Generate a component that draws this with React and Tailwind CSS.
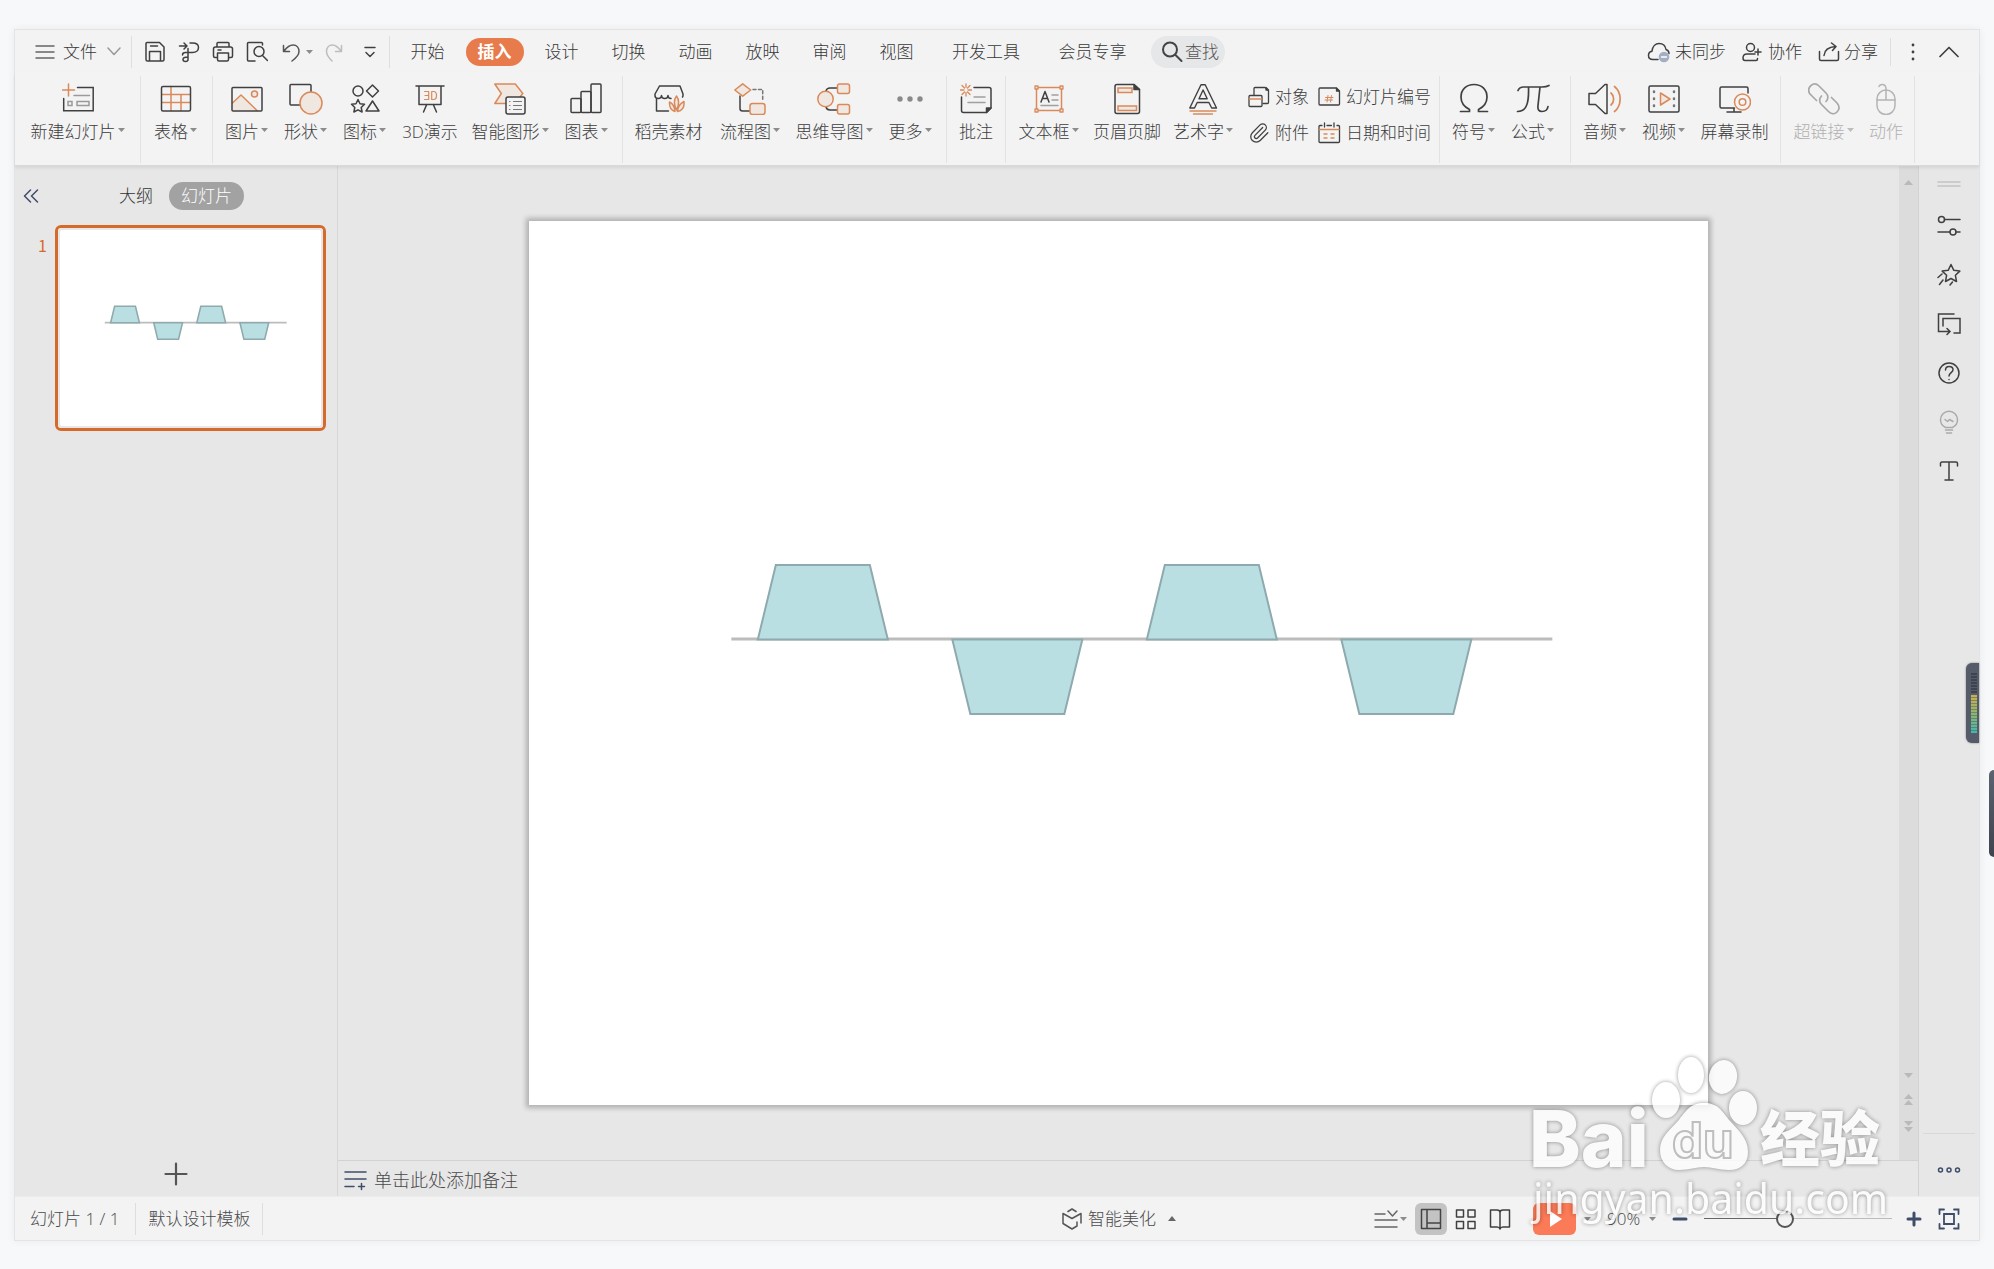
import { Paperclip } from 'lucide-react'

const INK = '#404040'
const ORANGE = '#d98a5b'
const TINT = '#f1e7e1'
const NAVY = '#3f4d68'

function Icon({ w = 32, h = 32, color = INK, stroke = 1.5, className = '', children }) {
  return (
    <svg
      width={w}
      height={h}
      viewBox={`0 0 ${w} ${h}`}
      fill="none"
      stroke={color}
      strokeWidth={stroke}
      strokeLinecap="round"
      strokeLinejoin="round"
      aria-hidden="true"
      className={`shrink-0 ${className}`}
    >
      {children}
    </svg>
  )
}

function Caret({ up = false, size = 7, className = 'text-[#8c8c8c]' }) {
  return (
    <svg
      width={size}
      height={size === 7 ? 4 : 5}
      viewBox="0 0 7 4"
      preserveAspectRatio="none"
      aria-hidden="true"
      className={`shrink-0 ${className}`}
    >
      <path d={up ? 'M0 4h7L3.500 0z' : 'M0 0h7L3.500 4z'} fill="currentColor" />
    </svg>
  )
}

/* ---------- ribbon icons ---------- */

const icons = {
  newSlide: (
    <Icon>
      <path d="M6.500 1v12M.5 7h12" stroke={ORANGE} />
      <path d="M15.500 4.500h15.700v23.300H1.700V15.500" strokeLinejoin="miter" />
      <path d="M12 12.500h15.500M6 18.500h4v4H6zM15 18.500h12v4H15z" stroke="#9a9a9a" strokeLinejoin="miter" />
    </Icon>
  ),
  table: (
    <Icon>
      <path d="M11 3.500v24M21 11.500v16M2 11.500h28M2 19.500h28" stroke={ORANGE} />
      <rect x="1.500" y="3.500" width="29" height="24.500" rx="1.500" />
    </Icon>
  ),
  picture: (
    <Icon>
      <path d="M1 20.500L10 12l15.500 16H1z" fill={TINT} stroke="none" />
      <path d="M1.500 20L10 12l16 15.500" stroke={ORANGE} />
      <circle cx="23.500" cy="11" r="3" fill={TINT} stroke={ORANGE} />
      <rect x="1" y="4.500" width="30" height="23.500" rx="1" />
    </Icon>
  ),
  shapes: (
    <Icon w={34}>
      <rect x="1" y="1.500" width="21" height="20.500" rx="1" />
      <circle cx="22" cy="20" r="11" fill={TINT} stroke={ORANGE} />
    </Icon>
  ),
  iconSet: (
    <Icon>
      <circle cx="9" cy="8" r="5" />
      <path d="M23.500 2l6 6-6 6-6-6z" />
      <path d="M9 16.500l2 4.300 4.500.5-3.300 3.200.9 4.500L9 26.800 4.900 29l.9-4.500-3.300-3.200 4.500-.5z" />
      <path d="M23.500 18l6.500 10H17z" />
    </Icon>
  ),
  threeD: (
    <Icon>
      <path d="M2 3h28M5 3v18.500h22V3M12.500 22l-3 7M19.500 22l3 7" />
      <path
        d="M10.500 8.500h4.200v8h-4.200M11 12.500h3.700M17.700 8.500h1.800c2 0 3 1.500 3 4s-1 4-3 4h-1.800z"
        stroke={ORANGE}
        strokeWidth="1.200"
      />
    </Icon>
  ),
  smartArt: (
    <Icon>
      <path d="M.8 1h20.500l7.500 9.500-8 10H.8l6.500-10z" fill={TINT} stroke={ORANGE} />
      <rect x="12" y="14" width="19" height="17" rx="2" fill="#f3f3f3" />
      <path d="M15.500 18.500h.5M15.500 22.500h.5M15.500 26.500h.5M19.500 18.500h8M19.500 22.500h8M19.500 26.500h8" stroke="#777" strokeWidth="1.200" />
    </Icon>
  ),
  chart: (
    <Icon>
      <rect x="1" y="15.500" width="10" height="14" rx="1" />
      <rect x="11" y="8.500" width="10" height="21" rx="1" />
      <rect x="21" y="1" width="10" height="28.500" rx="1" />
    </Icon>
  ),
  store: (
    <Icon>
      <path d="M30 12.500c0 .8-.2 1-.5 1.500M6.500 3h20.500l3 8v1.500M6.500 3L2 11v1.500c0 2 1.200 3 3.200 3s3.300-1 3.300-3c0 2 1.200 3 3.200 3s3.300-1 3.300-3c0 2 1 3 3 3" />
      <path d="M3.500 16v12h12" />
      <path d="M23.500 13c3 4 3 8 0 14-3-6-3-10 0-14zM16.500 19c3.500 1.500 5 4 5.500 9.500-4-1-5.800-4-5.500-9.500zM31 18.500c.6 6-1.500 9-6.500 10 .3-5 2.500-8 6.500-10z" fill={TINT} stroke={ORANGE} />
    </Icon>
  ),
  flow: (
    <Icon>
      <path d="M19 6.500h9.700V18" strokeDasharray="3 2.500" stroke="#777" />
      <path d="M6 13v12.500c0 1.500.8 2.500 2.500 2.500H16" />
      <path d="M8.700.8l8 6.200-8 6.200L.8 7z" fill={TINT} stroke={ORANGE} />
      <rect x="16" y="20.500" width="15" height="11" rx="2.500" fill={TINT} stroke={ORANGE} />
    </Icon>
  ),
  mindMap: (
    <Icon w={34}>
      <path d="M9 8c.5-2 2-3 4-3h7.500M9 24c.5 2 2 3 4 3h7.500" />
      <circle cx="8.500" cy="16" r="7.700" fill={TINT} stroke={ORANGE} />
      <rect x="20.500" y="1" width="12" height="9.500" rx="2" fill={TINT} stroke={ORANGE} />
      <rect x="20.500" y="21.500" width="12" height="9.500" rx="2" fill={TINT} stroke={ORANGE} />
    </Icon>
  ),
  more: (
    <Icon>
      <g fill="#8a8a8a" stroke="none">
        <circle cx="6" cy="16" r="2.700" />
        <circle cx="16" cy="16" r="2.700" />
        <circle cx="26" cy="16" r="2.700" />
      </g>
    </Icon>
  ),
  comment: (
    <Icon>
      <path d="M6 .8v3.500M6 9.500V13M.5 7h3.500M8 7h3.500M2 2.500l2.500 2.500M7.500 9l2.500 2.500M10 2.500L7.500 5M4.500 9L2 11.500" stroke={ORANGE} strokeWidth="1.300" />
      <path d="M14 4.500h15c1.300 0 2 .7 2 2V25l-4.500 4.500h-23c-1.200 0-2-.8-2-2V14" />
      <path d="M31 25h-4.500v4.500z" fill={INK} />
      <path d="M14 14h11M8 19.500h17" stroke="#a0a0a0" />
    </Icon>
  ),
  textBox: (
    <Icon>
      <path d="M5 4.500h22M5 27.500h22M3.500 6v20M28.500 6v20" stroke={ORANGE} />
      <path d="M2 3h3v3H2zM27 3h3v3h-3zM2 26h3v3H2zM27 26h3v3h-3z" stroke={ORANGE} strokeWidth="1.300" fill={TINT} />
      <path d="M8 19l4-10.500L16 19M9.500 15.500h5" />
      <path d="M19 12h6M19 17h6M8 22.500h17" stroke="#a0a0a0" />
    </Icon>
  ),
  headerFooter: (
    <Icon>
      <path d="M23 1.500H6c-1.200 0-2 .8-2 2v25c0 1.200.8 2 2 2h20.500c1.200 0 2-.8 2-2V6.500z" />
      <path d="M23 1.500v5h5.500z" fill={INK} />
      <path d="M7 5h14v4.500H7zM7 23h18.500v4.500H7z" stroke={ORANGE} fill={TINT} strokeLinejoin="miter" />
    </Icon>
  ),
  wordArt: (
    <Icon>
      <path d="M14 1.800h4.200L29.500 25h-4.800l-2.800-5.500H10.200L7.500 25H2.800zM12 15.800h8.200L16.100 7z" strokeWidth="1.400" />
      <path d="M3 28h26M6.500 31h19" stroke={ORANGE} strokeWidth="1.400" />
    </Icon>
  ),
  symbol: (
    <Icon stroke={1.700}>
      <path d="M2.500 28.500h9v-2C6.500 24 3 19.500 3 14 3 6.500 8.500 1.500 16 1.500S29 6.500 29 14c0 5.500-3.500 10-8.500 12.500v2h9" />
    </Icon>
  ),
  formula: (
    <Icon w={34} stroke={1.700}>
      <path d="M2 7.500C3 5 4.500 4 7.500 4H26c3 0 5-.3 7-1.500M12.500 4c.3 8 0 14-2 18.500-1.500 4-4.500 6-9 6M24 4l-2 18.500c-.5 4 .8 6 4 6s5.500-1.500 6-5" />
    </Icon>
  ),
  audio: (
    <Icon w={34}>
      <path d="M1 10.500h6.500L17 1.500h2v29h-2l-9.500-9H1z" />
      <path d="M23 10c3.500 3 3.500 9 0 12M26.500 3.500c7.500 6 7.500 19 0 25" stroke={ORANGE} strokeWidth="1.700" />
    </Icon>
  ),
  video: (
    <Icon>
      <rect x="1" y="3" width="30" height="26" rx="1.500" />
      <path d="M6 8.500v.5M6 15.500v.5M6 22.500v.5M26 8.500v.5M26 15.500v.5M26 22.500v.5" stroke="#777" strokeWidth="2.500" />
      <path d="M12.500 10l9.500 6-9.500 6z" stroke={ORANGE} fill={TINT} />
    </Icon>
  ),
  record: (
    <Icon>
      <path d="M15.500 25H2.500C1.500 25 1 24.500 1 23.500v-18C1 4.500 1.500 4 2.500 4h25c1 0 1.500.5 1.500 1.500V10M8 29h14M15 25.500V29" />
      <circle cx="23.500" cy="19" r="8" stroke={ORANGE} fill="#f3f3f3" />
      <circle cx="23.500" cy="19" r="3.300" stroke={ORANGE} />
    </Icon>
  ),
  link: (
    <Icon color="#a8a8a8" stroke={1.700}>
      <path d="M8.500 17.500L3 12a6 6 0 010-9.500c3-2.500 6-1.500 8 .5l7 7c2.500 2.500 2.500 6 0 8.500" />
      <path d="M23.500 14.500L29 20c2.500 3 2.500 6.500 0 9s-6 2-8.500-.5l-7-7c-2.500-2.500-2.500-6 0-8.500" />
    </Icon>
  ),
  mouse: (
    <Icon color="#b4b4b4">
      <rect x="7" y="7" width="18" height="24.500" rx="9" />
      <path d="M7 17h18M16 17V6c0-3-1.500-4.500-4-4.500-1.500 0-2.500.8-3 2" />
    </Icon>
  ),
}

const groups = [
  { id: 'slide', className: '', items: [{ icon: 'newSlide', label: '新建幻灯片', caret: true, width: 'w-[125px]' }] },
  { id: 'table', className: 'pr-0.5', items: [{ icon: 'table', label: '表格', caret: true, width: 'w-[69px]' }] },
  {
    id: 'art',
    className: 'px-1',
    items: [
      { icon: 'picture', label: '图片', caret: true, width: 'w-[59px]' },
      { icon: 'shapes', label: '形状', caret: true, width: 'w-[59px]' },
      { icon: 'iconSet', label: '图标', caret: true, width: 'w-[59px]' },
      { icon: 'threeD', label: '3D演示', width: 'w-18' },
      { icon: 'smartArt', label: '智能图形', caret: true, width: 'w-22' },
      { icon: 'chart', label: '图表', caret: true, width: 'w-16' },
    ],
  },
  {
    id: 'diagram',
    className: 'px-1',
    items: [
      { icon: 'store', label: '稻壳素材', width: 'w-[83px]' },
      { icon: 'flow', label: '流程图', caret: true, width: 'w-20' },
      { icon: 'mindMap', label: '思维导图', caret: true, width: 'w-22' },
      { icon: 'more', label: '更多', caret: true, width: 'w-16' },
    ],
  },
  { id: 'comment', className: 'px-1', items: [{ icon: 'comment', label: '批注', width: 'w-[50px]' }] },
  {
    id: 'text',
    className: 'pl-1 pr-2',
    items: [
      { icon: 'textBox', label: '文本框', caret: true, width: 'w-[77px]' },
      { icon: 'headerFooter', label: '页眉页脚', width: 'w-20' },
      { icon: 'wordArt', label: '艺术字', caret: true, width: 'w-18' },
    ],
    extra: true,
  },
  {
    id: 'symbol',
    className: 'pl-1 pr-2',
    items: [
      { icon: 'symbol', label: '符号', caret: true, width: 'w-[59px]' },
      { icon: 'formula', label: '公式', caret: true, width: 'w-[59px]' },
    ],
  },
  {
    id: 'media',
    className: 'px-1',
    items: [
      { icon: 'audio', label: '音频', caret: true, width: 'w-[59px]' },
      { icon: 'video', label: '视频', caret: true, width: 'w-[59px]' },
      { icon: 'record', label: '屏幕录制', width: 'w-[83px]' },
    ],
  },
  {
    id: 'link',
    className: 'px-1',
    items: [
      { icon: 'link', label: '超链接', caret: true, width: 'w-[77px]', disabled: true },
      { icon: 'mouse', label: '动作', width: 'w-[48px]', disabled: true },
    ],
  },
]

function RibbonButton({ item }) {
  return (
    <button
      type="button"
      disabled={item.disabled}
      className={`flex shrink-0 flex-col items-center gap-[5px] pt-[7px] ${item.width} ${item.disabled ? 'text-[#b0b0b0]' : 'text-[#3c3c3c]'}`}
    >
      {icons[item.icon]}
      <span className="flex items-center gap-0.5 whitespace-nowrap text-[17px] leading-6">
        {item.label}
        {item.caret && <Caret className={item.disabled ? 'mb-1 text-[#bdbdbd]' : 'mb-1 text-[#8c8c8c]'} />}
      </span>
    </button>
  )
}

function SmallButton({ icon, label }) {
  return (
    <button type="button" className="flex items-center gap-[5px] whitespace-nowrap text-[17px] leading-6 text-[#3c3c3c]">
      {icon}
      {label}
    </button>
  )
}

function TextExtras() {
  return (
    <div className="grid grid-cols-[auto_auto] content-start gap-x-2 gap-y-3 pl-[9px] pt-[9px]">
      <SmallButton
        label="对象"
        icon={
          <Icon w={22} h={22} stroke={1.300}>
            <path d="M6 9V2.500c0-.6.400-1 1-1h10l3.500 3v12c0 .6-.4 1-1 1H15" />
            <path d="M18 1.500v2.500h2.500z" fill={INK} />
            <rect x="1" y="9.500" width="13" height="11" rx="1" />
            <path d="M1.500 13h12" stroke={ORANGE} />
          </Icon>
        }
      />
      <SmallButton
        label="幻灯片编号"
        icon={
          <Icon w={24} h={22} stroke={1.300}>
            <path d="M19 2H3c-.6 0-1 .4-1 1v15c0 .6.400 1 1 1h18.500c.6 0 1-.4 1-1V5.500z" />
            <path d="M19.500 2v3h3z" fill={INK} />
            <path d="M11 9.500l-1 6.500M14.500 9.500l-1 6.500M8.500 11.500h7.500M8 14h7.500" stroke={ORANGE} strokeWidth="1" />
          </Icon>
        }
      />
      <SmallButton label="附件" icon={<Paperclip size={22} strokeWidth={1.400} color={INK} aria-hidden="true" />} />
      <SmallButton
        label="日期和时间"
        icon={
          <Icon w={24} h={22} stroke={1.300}>
            <path d="M5 3.500H3c-.6 0-1 .4-1 1v15c0 .6.400 1 1 1h18.500c.6 0 1-.4 1-1v-15c0-.6-.4-1-1-1H20M10 3.500h4.500M7.500 1v4M17 1v4" />
            <path d="M2.500 7.500h19.500M7 12h3M14 12h3M7 16h3M14 16h3" stroke={ORANGE} />
          </Icon>
        }
      />
    </div>
  )
}

function Ribbon() {
  return (
    <div className="relative z-10 flex border-b border-[#d9d9d9] bg-[#f3f3f3] pt-1 pb-0.5 shadow-[0_2px_3px_rgba(0,0,0,0.08)]">
      {groups.map((group) => (
        <div key={group.id} className={`flex h-[87px] shrink-0 items-start border-r border-[#e2e2e2] ${group.className}`}>
          {group.items.map((item) => (
            <RibbonButton key={item.label} item={item} />
          ))}
          {group.extra && <TextExtras />}
        </div>
      ))}
    </div>
  )
}

/* ---------- title row ---------- */

const tabs = ['开始', '插入', '设计', '切换', '动画', '放映', '审阅', '视图', '开发工具', '会员专享']
const tabWidths = { 开发工具: 'w-28', 会员专享: 'w-[101px]' }

function QuickAccess() {
  return (
    <div className="flex h-8 items-center border-x border-[#dedede] px-3">
      <button type="button" aria-label="保存" className="mr-3">
        <Icon w={22} h={22}>
          <path d="M3 1.500h12.500L20 6v12.500c0 .8-.5 1.500-1.500 1.500h-15C2.500 20 2 19.300 2 18.500v-16c0-.6.400-1 1-1zM5.500 20v-9.500h11V20M6.500 5h7" />
        </Icon>
      </button>
      <button type="button" aria-label="输出" className="mr-3">
        <Icon w={22} h={22}>
          <path d="M1.500 5h7M6 2l3 3-3 3M12 2h2.500c4 0 6 2 6 4.500s-2 5-6 5H7.500c-2 0-3 1-3 2.500M10 7.500v11c0 1.500-1 2-2.500 2s-2.500-.7-2.500-2 1-2.500 5-2.500" />
        </Icon>
      </button>
      <button type="button" aria-label="打印" className="mr-3">
        <Icon w={22} h={22}>
          <path d="M5 6V2.500c0-.6.400-1 1-1h10c.6 0 1 .4 1 1V6M5 16.500H3c-.8 0-1.500-.7-1.500-1.500V8c0-1 .6-2 2-2h15c1.400 0 2 1 2 2v7c0 .8-.7 1.500-1.500 1.500h-2M5.500 12h11v6.500c0 .8-.5 1.500-1.500 1.500H7c-1 0-1.500-.7-1.500-1.500zM6 9h3" />
        </Icon>
      </button>
      <button type="button" aria-label="打印预览" className="mr-3.5">
        <Icon w={22} h={22}>
          <path d="M9 20H2.500c-.6 0-1-.5-1-1V2.500c0-.6.400-1 1-1h13c.6 0 1 .4 1 1V4" />
          <circle cx="13" cy="10.500" r="5" />
          <path d="M16.500 14.500l5 5" />
        </Icon>
      </button>
      <button type="button" aria-label="撤销" className="mr-3 flex items-center gap-1.5">
        <Icon w={18} h={20} color="#555">
          <path d="M1.500 3.500v6h6M2 9C5 5 8 3 11 3c4 0 6 3 6 6.500 0 4-3 6.500-7 9.500" />
        </Icon>
        <Caret />
      </button>
      <button type="button" aria-label="恢复" disabled className="mr-5">
        <Icon w={18} h={20} color="#bdbdbd">
          <path d="M16.500 3.500v6h-6M16 9C13 5 10 3 7.500 3 4 3 1.500 5.500 1.500 9.500c0 4 2.500 6.500 5.500 9.500" />
        </Icon>
      </button>
      <button type="button" aria-label="更多快捷命令">
        <Icon w={14} h={14}>
          <path d="M2 2.500h10M3 7.500l4 4 4-4" />
        </Icon>
      </button>
    </div>
  )
}

function TitleRow() {
  return (
    <header className="flex h-[42px] items-center pt-px text-[17px] leading-6 text-[#383838]">
      <button type="button" className="ml-5 mr-2.5 flex items-center gap-2 whitespace-nowrap">
        <Icon w={20} h={16} color="#666">
          <path d="M1 2h18M1 8h18M1 14h18" />
        </Icon>
        文件
        <Icon w={14} h={9} color="#999" className="ml-0.5">
          <path d="M1 1l6 6.500L13 1" />
        </Icon>
      </button>
      <QuickAccess />
      <nav className="ml-1 flex items-center">
        {tabs.map((tab) => (
          <button
            key={tab}
            type="button"
            className={`flex shrink-0 justify-center whitespace-nowrap ${tabWidths[tab] || 'w-[67px]'}`}
          >
            <span className={tab === '插入' ? 'rounded-full bg-[#e87b4c] px-3 py-0.5 font-bold text-white' : ''}>{tab}</span>
          </button>
        ))}
      </nav>
      <label className="ml-2 flex h-8 w-[74px] items-center gap-0.5 rounded-full bg-[#e6e7e9] pl-2.5">
        <Icon w={22} h={22} stroke={2} color="#444">
          <circle cx="9" cy="8.500" r="7" />
          <path d="M14.500 14l6 6" />
        </Icon>
        <input type="text" aria-label="查找" placeholder="查找" className="w-9 bg-transparent outline-none placeholder:text-[#555]" />
      </label>
      <div className="ml-auto flex items-center whitespace-nowrap">
        <button type="button" className="mr-4 flex items-center gap-1">
          <Icon w={24} h={22}>
            <path d="M11 18.500H6c-2.500 0-4.500-1.500-4.500-4s1.500-4 3.500-4.300C5.500 5.500 8.500 2.500 12 2.500c4 0 6.500 2.500 7 6 2 .8 3 2 3 4" />
            <circle cx="17" cy="16" r="5.300" fill="#a3aec2" stroke="none" />
            <path d="M14.500 16h5" stroke="#fff" />
          </Icon>
          未同步
        </button>
        <button type="button" className="mr-4 flex items-center gap-1.5">
          <Icon w={20} h={20}>
            <circle cx="8.500" cy="5.500" r="4" />
            <path d="M13 12H5c-2.500 0-4 1.500-4 4 0 1.500.7 2.500 2 2.500h11c1 0 1.500-.5 1.500-1.500v-.5M16 7v6M13 10h6" />
          </Icon>
          协作
        </button>
        <button type="button" className="flex items-center gap-1">
          <Icon w={22} h={20}>
            <path d="M1.500 9.500V17c0 1 .5 1.500 1.500 1.500h16c1 0 1.500-.5 1.500-1.500V9.500M6 13.500C6.500 8 10 5 17.500 4.500M13.500 1l4.500 3.500-3.500 4" />
          </Icon>
          分享
        </button>
        <div className="ml-3 h-7 w-px bg-[#dedede]" />
        <button type="button" aria-label="更多" className="ml-5">
          <Icon w={4} h={18}>
            <path d="M2 2v.1M2 9v.1M2 16v.1" strokeWidth="2.800" />
          </Icon>
        </button>
        <button type="button" aria-label="收起功能区" className="ml-6 mr-5">
          <Icon w={20} h={12} stroke={1.700}>
            <path d="M1 10.500L10 1.500l9 9" />
          </Icon>
        </button>
      </div>
    </header>
  )
}

/* ---------- slide ---------- */

function SlideArt({ stroke, line }) {
  return (
    <svg viewBox="0 0 1178 884" className="block h-full w-full" role="img" aria-label="幻灯片 1">
      <path d="M202 418h821" stroke="#bcbcbc" strokeWidth={line} />
      <g fill="#b9dfe2" stroke="#8eaaae" strokeWidth={stroke}>
        <path d="M228.500 418.500h130l-18-74.500h-94z" />
        <path d="M423 418.500h130l-18 74.500h-94z" />
        <path d="M617.500 418.500h130l-18-74.500h-94z" />
        <path d="M812 418.500h130l-18 74.500h-94z" />
      </g>
    </svg>
  )
}

function SlidePanel() {
  return (
    <aside className="flex w-[323px] shrink-0 flex-col border-r border-[#d8d8d8]">
      <div className="mt-4 flex h-7 items-center text-[17px] leading-6 text-[#333]">
        <button type="button" aria-label="收起" className="ml-2">
          <Icon w={16} h={14} color={NAVY}>
            <path d="M7.500 1L1.500 7l6 6M14.500 1l-6 6 6 6" />
          </Icon>
        </button>
        <button type="button" className="ml-20">大纲</button>
        <button type="button" className="ml-4 rounded-full bg-[#a2a2a2] px-3 py-0.5 text-white">幻灯片</button>
      </div>
      <div className="mt-[15px] flex pr-[11px]">
        <span className="w-10 shrink-0 pr-2 pt-2 text-right font-['Noto_Sans_CJK_SC',sans-serif] text-base font-normal leading-6 text-[#d66a2b]">
          1
        </span>
        <button type="button" aria-label="幻灯片 1" className="min-w-0 grow rounded-md border-3 border-[#d66a2b] bg-white">
          <span className="block rounded-sm border-2 border-[#e7e7e7]">
            <SlideArt stroke={7} line={7} />
          </span>
        </button>
      </div>
      <button type="button" aria-label="新建幻灯片" className="mb-2.5 mt-auto self-center">
        <Icon w={24} h={24} stroke={2.200} color="#555">
          <path d="M12 1.500v21M1.500 12h21" />
        </Icon>
      </button>
    </aside>
  )
}

function Scrollbar() {
  return (
    <div className="flex w-5 shrink-0 flex-col items-center border-r border-[#d2d2d2] bg-[#dcdcdc] pb-7 pt-3.5">
      <Caret up size={9} className="text-[#b9b9b9]" />
      <Caret size={9} className="mt-auto text-[#b9b9b9]" />
      <div className="mt-4 flex flex-col gap-px">
        <Caret up size={9} className="text-[#b9b9b9]" />
        <Caret up size={9} className="text-[#b9b9b9]" />
      </div>
      <div className="mt-4 flex flex-col gap-px">
        <Caret size={9} className="text-[#b9b9b9]" />
        <Caret size={9} className="text-[#b9b9b9]" />
      </div>
    </div>
  )
}

function Editor() {
  return (
    <main className="flex min-w-0 grow flex-col">
      <div className="flex min-h-0 grow">
        <div className="flex min-w-0 grow items-center justify-center py-[55px]">
          <div className="aspect-[4/3] h-full bg-white shadow-[0_0_5px_3px_rgba(0,0,0,0.24)]">
            <SlideArt stroke={2} line={3} />
          </div>
        </div>
        <Scrollbar />
      </div>
      <label className="flex h-9 items-center gap-1.5 border-r border-t border-[#d2d2d2] pl-1.5 pt-0.5">
        <Icon w={24} h={22} color={NAVY}>
          <path d="M1 3h21M1 10h21M1 17.500h9M14.500 17.500h6M17.500 14.500v6" />
        </Icon>
        <input
          type="text"
          aria-label="备注"
          placeholder="单击此处添加备注"
          className="grow bg-transparent text-lg leading-6 outline-none placeholder:text-[#4a4a4a]"
        />
      </label>
    </main>
  )
}

const tools = [
  {
    label: '对象属性',
    art: (
      <Icon w={24} h={24}>
        <circle cx="4.500" cy="5.500" r="3" />
        <path d="M7.500 5.500H23M1 18h12M19 18h4" />
        <circle cx="16" cy="18" r="3" />
      </Icon>
    ),
  },
  {
    label: '动画窗格',
    art: (
      <Icon w={24} h={24}>
        <path d="M14 1.500l2.800 5.800 6 .8-4.400 4.200 1.100 6.200L14 15.500l-5.500 3 1.100-6.200L5.200 8.100l6-.8zM5 11l-4 3.500M6 17l-3.500 4.500M15.500 19l-2.500 3" />
      </Icon>
    ),
  },
  {
    label: '幻灯片切换',
    art: (
      <Icon w={24} h={24}>
        <path d="M17 2H1.500v17.500H12M10 16.500l3 3-3 3M6 14V6.500h17V21h-6" strokeLinejoin="miter" />
      </Icon>
    ),
  },
  {
    label: '帮助',
    art: (
      <Icon w={24} h={24}>
        <circle cx="12" cy="12" r="10" />
        <path d="M8.500 9c0-2.200 1.500-3.500 3.700-3.500s3.800 1.300 3.800 3.300c0 2.700-4 3-4 6.200M12 18.500v.1" />
      </Icon>
    ),
  },
  {
    label: '设计灵感',
    art: (
      <Icon w={24} h={24} color="#aaa">
        <path d="M8.500 17.500C5.500 16 3.500 13 3.500 9.800a8.500 8.500 0 0117 0c0 3.200-2 6.200-5 7.700zM8.500 20h7M9.500 23h5M8 9.500l2.500 2 2-2 3.500 2" />
      </Icon>
    ),
  },
  {
    label: '文字',
    art: (
      <Icon w={24} h={24}>
        <path d="M3.500 7V4.500c0-.8.500-1.500 1.500-1.500h14c1 0 1.500.7 1.500 1.500V7M12 3v18M8 21h8" />
      </Icon>
    ),
  },
]

function ToolRail() {
  return (
    <aside className="relative flex w-15 shrink-0 flex-col items-center">
      <Icon w={24} h={8} color="#c4c4c4" className="mt-3.5">
        <path d="M1 2h22M1 6h22" />
      </Icon>
      <div className="mt-[26px] flex flex-col gap-[25px]">
        {tools.map((tool) => (
          <button key={tool.label} type="button" aria-label={tool.label}>
            {tool.art}
          </button>
        ))}
      </div>
      <div className="mt-auto flex w-full flex-col items-center px-1">
        <div className="h-px w-full bg-[#d8d8d8]" />
        <button type="button" aria-label="更多工具" className="mb-[22px] mt-8 flex">
          <Icon w={24} h={8} color={NAVY}>
            <circle cx="3.500" cy="4" r="2" />
            <circle cx="12" cy="4" r="2" />
            <circle cx="20.500" cy="4" r="2" />
          </Icon>
        </button>
      </div>
      {/* docked level meter */}
      <div className="absolute right-0 top-[497px] flex h-[80px] w-[13px] flex-col gap-px rounded-l-md bg-[#555b68] py-2.5 pl-[5px] pr-0.5 shadow-[0_0_2px_rgba(0,0,0,0.5)]">
        <div className="grow bg-[repeating-linear-gradient(#3d4350_0_2px,#555b68_2px_3px)]" />
        <div className="h-[38px] bg-[repeating-linear-gradient(transparent_0_2px,#555b6888_2px_3px),linear-gradient(#c9b04a,#8db66b,#3fb9ae)]" />
      </div>
    </aside>
  )
}

/* ---------- status bar ---------- */

function StatusBar() {
  return (
    <footer className="grid h-11 shrink-0 grid-cols-[1fr_auto_1fr] items-center whitespace-nowrap border-t border-[#ececec] bg-[#f3f3f3] text-[17px] leading-6 text-[#4a4a4a]">
      <div className="flex items-center">
        <span className="flex h-8 items-center border-r border-[#dedede] pl-[15px] pr-4">幻灯片 1 / 1</span>
        <span className="flex h-8 items-center border-r border-[#dedede] px-3">默认设计模板</span>
      </div>
      <button type="button" className="flex items-center gap-1.5 pl-61">
        <Icon w={20} h={22} color="#555">
          <path d="M6 3.500L10 1l4 2.500M1 5.500v10L10 21l5-3v-4M1 5.500l9 5 9-5v9.500" />
        </Icon>
        智能美化
        <Caret up size={8} className="ml-1.5 text-[#666]" />
      </button>
      <div className="flex items-center justify-end">
        <button type="button" aria-label="备注显示" className="mr-2 flex items-center gap-0.5">
          <Icon w={24} h={20} color="#666">
            <path d="M1 5h10M14 2l4.500 5L23 2M1 11h22M1 18h22" />
          </Icon>
          <Caret />
        </button>
        <button type="button" aria-label="普通视图" className="mr-2 flex size-8 items-center justify-center rounded-md bg-[#c3c3c3]">
          <Icon w={22} h={22} color="#444">
            <path d="M1.500 1.500h19v19h-19zM7 1.500v19M7 15h13.500" />
          </Icon>
        </button>
        <button type="button" aria-label="幻灯片浏览" className="mr-3">
          <Icon w={22} h={22}>
            <path d="M1.500 2h7v7h-7zM13 2h7v7h-7zM1.500 13.500h7v7h-7zM13 13.500h7v7h-7z" />
          </Icon>
        </button>
        <button type="button" aria-label="阅读视图" className="mr-[22px]">
          <Icon w={22} h={22}>
            <path d="M1.500 2H8c2 0 3 1 3 2.500V21c-.5-1.500-1.500-2-3-2H1.500zM20.500 2H14c-2 0-3 1-3 2.500V21c.5-1.500 1.500-2 3-2h6.500z" />
          </Icon>
        </button>
        <button type="button" aria-label="放映" className="flex h-8 w-[43px] items-center justify-center rounded-md bg-[#fb7a57]">
          <Icon w={14} h={18} color="none">
            <path d="M2 1l12 8-12 8z" fill="#fff" />
          </Icon>
        </button>
        <Caret className="ml-2 text-[#8c8c8c]" />
        <label className="ml-4 flex items-center gap-1.5">
          <select aria-label="缩放比例" defaultValue="90%" className="w-9 appearance-none bg-transparent outline-none">
            <option>90%</option>
          </select>
          <Caret />
        </label>
        <button type="button" aria-label="缩小" className="ml-4">
          <Icon w={16} h={16} color={NAVY} stroke={3}>
            <path d="M2 8h12" />
          </Icon>
        </button>
        <input
          type="range"
          aria-label="缩放"
          min="10"
          max="200"
          defaultValue="91"
          className="ml-4 h-4 w-[188px] appearance-none bg-[linear-gradient(90deg,#666_40%,#bbb_40%)] bg-[length:100%_1px] bg-center bg-no-repeat [&::-webkit-slider-thumb]:size-4.5 [&::-webkit-slider-thumb]:appearance-none [&::-webkit-slider-thumb]:rounded-full [&::-webkit-slider-thumb]:border-2 [&::-webkit-slider-thumb]:border-[#555] [&::-webkit-slider-thumb]:bg-[#f3f3f3]"
        />
        <button type="button" aria-label="放大" className="ml-3.5">
          <Icon w={16} h={16} color={NAVY} stroke={3}>
            <path d="M2 8h12M8 2v12" />
          </Icon>
        </button>
        <button type="button" aria-label="适应窗口" className="ml-4 mr-[19px]">
          <Icon w={22} h={22} color={NAVY}>
            <path d="M1.500 6V1.500H6M16 1.500h4.500V6M20.500 16v4.500H16M6 20.500H1.500V16M6 6h10v10H6z" strokeLinejoin="miter" strokeWidth="1.800" />
          </Icon>
        </button>
      </div>
    </footer>
  )
}

function Watermark() {
  return (
    <svg
      width="380"
      height="196"
      viewBox="0 0 380 196"
      aria-hidden="true"
      className="pointer-events-none absolute bottom-[23px] right-[94px] z-20 opacity-80 drop-shadow-[0_0_2px_rgba(0,0,0,0.5)]"
    >
      <g fill="#fff" fontFamily="Inter, 'Noto Sans CJK SC', sans-serif">
        <text x="9" y="117" fontSize="78" fontWeight="800">Bai</text>
        <ellipse cx="146" cy="50" rx="14" ry="18" />
        <ellipse cx="171" cy="25" rx="13" ry="18" />
        <ellipse cx="203" cy="27" rx="14" ry="17" transform="rotate(10 203 27)" />
        <ellipse cx="223" cy="58" rx="14" ry="17" />
        <path d="M184 53c14 0 18 8 26 18 8 9 18 17 18 31 0 12-8 18-19 18-10 0-17-3-25-3s-15 3-25 3c-11 0-19-8-19-20 0-13 10-20 18-29 8-10 12-18 26-18z" />
        <text x="152" y="108" fontSize="49" fontWeight="700" stroke="#b4b4b4" strokeWidth="2">du</text>
        <text x="240" y="111" fontSize="60" fontWeight="900">经验</text>
        <text x="13" y="164" fontSize="41" fontWeight="400" fontFamily="'Noto Sans', sans-serif">jingyan.baidu.com</text>
      </g>
    </svg>
  )
}

export default function App() {
  return (
    <div className="relative flex h-screen min-h-[720px] flex-col overflow-hidden bg-[#f7f8fa] px-3.5 pb-7 pt-[29px] font-['Open_Sans','Noto_Sans_CJK_SC',sans-serif] font-light">
      <div className="flex min-h-0 grow flex-col border border-[#e4e4e4] bg-[#f3f3f3] shadow-[0_0_8px_rgba(0,0,0,0.06)]">
        <TitleRow />
        <Ribbon />
        <div className="flex min-h-0 grow bg-[#e7e7e7]">
          <SlidePanel />
          <Editor />
          <ToolRail />
        </div>
        <StatusBar />
      </div>
      <div className="absolute right-0 top-[770px] h-[87px] w-[5px] rounded-l-md bg-linear-to-b from-[#5c6270] to-[#3f434e]" />
      <Watermark />
    </div>
  )
}
